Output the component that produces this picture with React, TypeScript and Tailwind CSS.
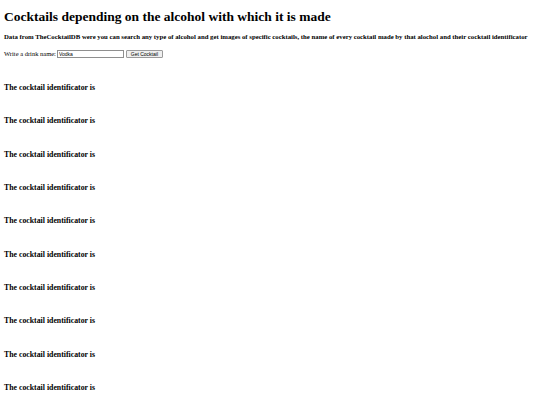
export default function App() {
  const rows = Array.from({ length: 10 });

  return (
    <div className="min-h-screen bg-white px-[4px] text-black" style={{ fontFamily: '"Liberation Serif", "Times New Roman", serif' }}>
      <h1 className="pt-[9px] text-[13.5px] font-bold leading-[16px]">
        Cocktails depending on the alcohol with which it is made
      </h1>
      <h5 className="mt-[8px] text-[6.75px] font-bold leading-[8px]">
        Data from TheCocktailDB were you can search any type of alcohol and get images of specific cocktails, the name of every cocktail made by that alochol and their cocktail identificator
      </h5>
      <div className="mt-[8px] flex items-center text-[6.5px] leading-[9px]">
        <span>Write a drink name:</span>
        <input
          defaultValue="Vodka"
          className="ml-[1px] h-[8px] w-[67px] border border-[#8f8f8f] px-[1px] text-[5px] leading-[6px]"
          style={{ fontFamily: '"Liberation Sans", Arial, sans-serif' }}
        />
        <button
          className="ml-[2px] h-[8px] w-[37px] rounded-[1px] border border-[#9a9a9a] bg-[#efefef] px-0 text-[5px] leading-[6px]"
          style={{ fontFamily: '"Liberation Sans", Arial, sans-serif' }}
        >
          Get Cocktail
        </button>
      </div>
      <div className="mt-[25px] flex flex-col gap-[24.33px]">
        {rows.map((_, i) => (
          <h4 key={i} className="text-[7.8px] font-bold leading-[9px]">
            The cocktail identificator is
          </h4>
        ))}
      </div>
    </div>
  );
}
